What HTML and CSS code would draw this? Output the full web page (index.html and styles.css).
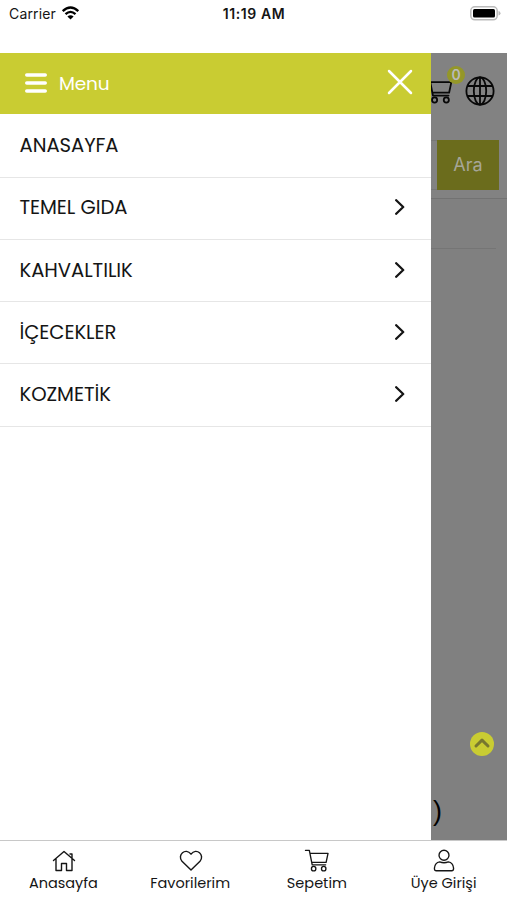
FILE: index.html
```html
<!DOCTYPE html>
<html lang="tr">
<head>
<meta charset="utf-8">
<title>Menu</title>
<link rel="stylesheet" href="styles.css">
</head>
<body>
<svg width="0" height="0" class="defs">
  <symbol id="cart" viewBox="0 0 26 24"><path d="M1 1.500h4l3 15h14M5.500 4.500h19l-2 9.500H7.500"/><circle cx="9.500" cy="20.500" r="2.300"/><circle cx="20" cy="20.500" r="2.300"/></symbol>
  <symbol id="chevron" viewBox="0 0 10 16"><path d="M1.200 1.200 8.200 8l-7 6.800"/></symbol>
</svg>
<header class="status">
  <div class="carrier"><span>Carrier</span>
    <svg class="wifi" viewBox="0 0 18 14"><path d="M1.200 5.200Q9-2.200 16.800 5.200M4 8.200Q9 3.500 14 8.200"/><path class="solid" d="M9 13.600 5.900 10.500Q9 7.900 12.100 10.500Z"/></svg>
  </div>
  <div class="clock">11:19 AM</div>
  <svg class="battery" viewBox="0 0 31 15"><rect x=".8" y=".8" width="26.400" height="13" rx="4"/><path class="tip" d="M28.500 5v4.600q2-.5 2-2.300t-2-2.300Z"/><rect class="charge" x="3" y="3" width="22" height="8.600" rx="1.500"/></svg>
</header>
<main class="stage">
  <section class="drawer">
    <div class="drawer-head">
      <svg class="burger" viewBox="0 0 22 20"><path d="M1.800 2h18.400M1.800 10h18.400M1.800 18h18.400"/></svg>
      <span class="title">Menu</span>
      <svg class="close" viewBox="0 0 26 26"><path d="m2 2 22 22M24 2 2 24"/></svg>
    </div>
    <nav class="menu">
      <a class="row"><span>ANASAYFA</span></a>
      <a class="row"><span>TEMEL GIDA</span><svg class="chev"><use href="#chevron"/></svg></a>
      <a class="row"><span>KAHVALTILIK</span><svg class="chev"><use href="#chevron"/></svg></a>
      <a class="row"><span>İÇECEKLER</span><svg class="chev"><use href="#chevron"/></svg></a>
      <a class="row"><span>KOZMETİK</span><svg class="chev"><use href="#chevron"/></svg></a>
    </nav>
  </section>
  <section class="page">
    <div class="page-head">
      <div class="tools">
        <div class="basket"><svg class="cart-lg"><use href="#cart"/></svg><span class="badge">0</span></div>
        <svg class="globe" viewBox="0 0 30 30"><circle cx="15" cy="15" r="13.600"/><ellipse cx="15" cy="15" rx="6.200" ry="13.600"/><path d="M15 1.400v27.200M3 10h24M3 20h24"/></svg>
      </div>
      <div class="search"><span class="field"></span><button class="go">Ara</button></div>
    </div>
    <div class="rule"></div>
    <svg class="top" viewBox="0 0 24 24"><circle cx="12" cy="12" r="12"/><path d="m6 14 6-5.800L18 14"/></svg>
    <div class="paren">)</div>
  </section>
</main>
<footer class="tabs">
  <a class="tab"><svg viewBox="0 0 24 22"><path d="m1.500 11 10.500-9 10.500 9M4 9.500v11.500h5.500v-7h5v7H20V9.500M18 4.500h2v4"/></svg><span>Anasayfa</span></a>
  <a class="tab"><svg viewBox="0 0 24 22"><path d="M12 20.500 3 11.700C-2.200 5.800 6.500-2.500 12 4.700 17.500-2.500 26.200 5.800 21 11.700Z"/></svg><span>Favorilerim</span></a>
  <a class="tab"><svg class="cart-sm"><use href="#cart"/></svg><span>Sepetim</span></a>
  <a class="tab"><svg viewBox="0 0 24 24"><circle cx="12" cy="6.500" r="5.200"/><path d="M7.500 13.500q4.500 1.700 9 0 5 .8 5.500 6.500 0 2.700-2 2.700H4q-2 0-2-2.700.5-5.700 5.500-6.500Z"/></svg><span>Üye Girişi</span></a>
</footer>
</body>
</html>
```
FILE: styles.css
```css
* { box-sizing: border-box; }
body { margin: 0; width: 507px; height: 900px; overflow: hidden; display: flex; flex-direction: column; background: #fff; color: #151515; font-family: Poppins, Lato, sans-serif; }
svg { fill: none; stroke: currentColor; stroke-linecap: round; stroke-linejoin: round; flex: none; }
.defs { position: absolute; }
.status { height: 52.5px; padding: 5px 6px 0 9px; display: grid; grid-template-columns: 1fr auto 1fr; align-items: start; font: 14px/18px Inter, sans-serif; }
.carrier { display: flex; gap: 5px; letter-spacing: .15px; }
.wifi { width: 19px; height: 14px; margin-top: 1px; stroke: #000; stroke-width: 2.300; stroke-linecap: butt; }
.wifi .solid { fill: #000; stroke: none; }
.clock { font-weight: 600; letter-spacing: .6px; margin: 0 0 0 -2px; }
.battery { width: 31px; height: 15px; justify-self: end; margin-top: 1px; stroke: #bbb; stroke-width: 1.500; }
.battery .charge { fill: #000; stroke: none; }
.battery .tip { fill: #bbb; stroke: none; }
.stage { height: 787px; display: flex; }
.drawer { width: 431px; background: #fff; }
.drawer-head { height: 61.500px; padding: 0 18px 0 25px; display: flex; align-items: center; background: #c9cc32; color: #fff; }
.burger { width: 22px; height: 20px; stroke-width: 3.600; }
.title { margin-left: 12px; font-size: 18.500px; letter-spacing: -.2px; }
.close { width: 26px; height: 26px; margin-left: auto; margin-top: -3px; stroke-width: 2.500; }
.menu { padding-top: 1.300px; }
.row { height: 62.300px; padding: 0 26px 1.500px 19.500px; display: flex; align-items: center; justify-content: space-between; border-bottom: 1.500px solid #e6e6e6; font-size: 19.600px; letter-spacing: -.05px; }
.chev { width: 10px; height: 16px; stroke-width: 2.300; }
.page { width: 76px; overflow: hidden; background: #808080; display: flex; flex-direction: column; }
.page-head { height: 146.500px; padding-top: 13px; background: #828282; border-bottom: 1.500px solid #727272; }
.tools { height: 60px; display: flex; color: #080808; }
.basket { width: 34px; position: relative; }
.cart-lg { width: 29px; height: 27px; margin: 11px 0 0 -7px; stroke-width: 1.600; }
.badge { position: absolute; left: 16px; top: 0; width: 18px; height: 18px; border-radius: 50%; background: #949728; color: #bbb; font: 600 14px/18px Inter, sans-serif; text-align: center; }
.globe { width: 30px; height: 30px; margin: 10px 0 0 .3px; stroke-width: 1.800; }
.search { margin-top: 14px; display: flex; height: 50px; }
.field { width: 6px; border: solid #777; border-width: 1px 0; }
.go { width: 62px; padding: 0; border: 0; background: #6b6c1c; color: #a6a697; font: 18px/50px Inter, sans-serif; }
.rule { height: 50px; margin-right: 11px; border-bottom: 1px solid #757575; }
.top { width: 24px; height: 24px; margin: auto 0 0 39px; fill: #c9cc32; stroke: none; }
.top path { fill: none; stroke: #77772f; stroke-width: 3; }
.paren { margin: 37px 0 11px 2px; height: 36px; color: #000; font: 27px/36px "Liberation Sans", sans-serif; }
.tabs { height: 60.500px; padding-top: 8px; display: grid; grid-template-columns: repeat(4, 1fr); border-top: 1.500px solid #c8c8c8; }
.tab { display: flex; flex-direction: column; align-items: center; gap: 1px; font-size: 14.500px; line-height: 20px; white-space: nowrap; }
.tab svg { width: 24px; height: 23px; stroke-width: 1.400; margin-left: 1px; }
.tab .cart-sm { width: 26px; }
```
